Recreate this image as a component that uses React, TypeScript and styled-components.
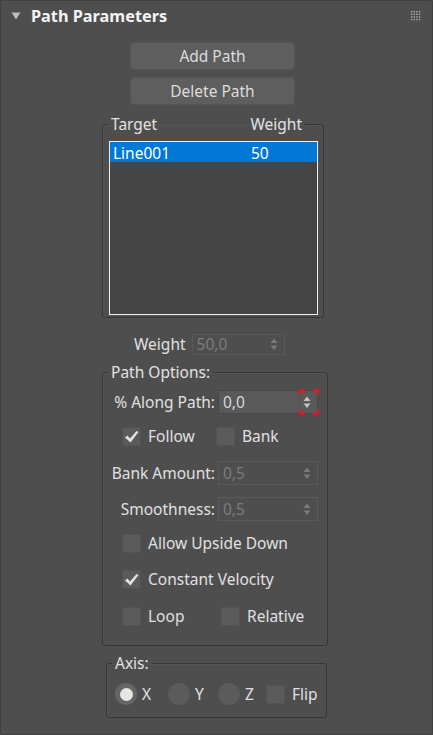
import React from "react";
import styled, { createGlobalStyle } from "styled-components";

const Global = createGlobalStyle`
  html, body { margin: 0; padding: 0; background: #4e4e4e; }
  * { box-sizing: border-box; }
  body { font-family: "Noto Sans", "Open Sans", sans-serif; font-size: 15.5px; color: #dedede; }
`;

const Page = styled.div`
  width: 433px;
  height: 735px;
  background: #4e4e4e;
  border: 1px solid #404040;
  border-radius: 2px;
  overflow: hidden;
`;

const Header = styled.div`
  height: 30px;
  display: flex;
  align-items: center;
  padding: 0 11px 0 10px;
`;

const Title = styled.div`
  flex: 1;
  margin-left: 10px;
  font-weight: 700;
  font-size: 16.3px;
  color: #f4f4f4;
`;

const Body = styled.div`
  display: flex;
  flex-direction: column;
  align-items: flex-start;
  padding-left: 101px;
`;

const Button = styled.div<{ $top: number }>`
  margin: ${(p) => p.$top}px 0 0 28px;
  width: 165px;
  height: 28px;
  border-radius: 4px;
  background: #5e5e5e;
  border: 1px solid #555;
  display: flex;
  align-items: center;
  justify-content: center;
  font-size: 15.5px;
  color: #dcdcdc;
`;

const Group = styled.fieldset<{ $w: number; $top: number; $left?: number; $pt: number; $pb: number }>`
  margin: ${(p) => p.$top}px 0 0 ${(p) => p.$left ?? 0}px;
  width: ${(p) => p.$w}px;
  min-inline-size: 0;
  border: 1px solid #363636;
  border-radius: 3px;
  padding: ${(p) => p.$pt}px 0 ${(p) => p.$pb}px 0;
  box-shadow: inset 1px 1px 0 #555;
`;

const Legend = styled.legend<{ $ml: number; $w?: number }>`
  margin-left: ${(p) => p.$ml}px;
  padding: 0 3px;
  height: 20px;
  line-height: 20px;
  font-size: 15.5px;
  color: #e2e2e2;
  ${(p) => (p.$w ? `width: ${p.$w}px; display: flex; justify-content: space-between;` : "")}
`;

const ListBox = styled.div`
  margin-left: 6px;
  width: 209px;
  height: 174px;
  background: #444;
  border: 1px solid #f0f0f0;
`;

const ListRow = styled.div<{ $selected?: boolean }>`
  height: 20px;
  display: grid;
  grid-template-columns: 138px 1fr;
  align-items: center;
  padding-left: 3px;
  background: ${(p) => (p.$selected ? "#0078d7" : "transparent")};
  color: #fff;
  font-size: 15.5px;
`;

const FieldRow = styled.div<{ $top: number; $left: number }>`
  margin: ${(p) => p.$top}px 0 0 ${(p) => p.$left}px;
  display: flex;
  align-items: center;
  gap: 6px;
`;

const Label = styled.span<{ $w?: number }>`
  font-size: 15.5px;
  color: #e0e0e0;
  white-space: nowrap;
  ${(p) => (p.$w ? `width: ${p.$w}px; text-align: right;` : "")}
`;

const Spinner = styled.div<{ $w: number; $h: number; $active?: boolean }>`
  position: relative;
  width: ${(p) => p.$w}px;
  height: ${(p) => p.$h}px;
  display: flex;
  align-items: center;
  justify-content: space-between;
  padding: 0 6px 0 4px;
  background: ${(p) => (p.$active ? "#595959" : "#4e4e4e")};
  border: 1px solid ${(p) => (p.$active ? "#484848" : "#5a5a5a")};
  color: ${(p) => (p.$active ? "#d8d8d8" : "#7c7c7c")};
  font-size: 15.5px;
`;

const Inner = styled.div`
  display: flex;
  flex-direction: column;
`;

const OptRow = styled.div<{ $top: number; $h?: number }>`
  margin-top: ${(p) => p.$top}px;
  height: ${(p) => p.$h ?? 20}px;
  display: flex;
  align-items: center;
`;

const CheckItem = styled.div<{ $left: number; $w?: number }>`
  margin-left: ${(p) => p.$left}px;
  ${(p) => (p.$w ? `width: ${p.$w}px;` : "")}
  display: flex;
  align-items: center;
  gap: 7px;
  font-size: 15.5px;
  color: #e0e0e0;
`;

const Box = styled.span`
  width: 19px;
  height: 19px;
  flex: none;
  background: #5b5b5b;
  border: 1px solid #535353;
  display: flex;
  align-items: center;
  justify-content: center;
`;

const RadioItem = styled.div<{ $w: number }>`
  width: ${(p) => p.$w}px;
  display: flex;
  align-items: center;
  gap: 5px;
  font-size: 15.5px;
  color: #e0e0e0;
`;

const Radio = styled.span<{ $on?: boolean }>`
  width: 22px;
  height: 22px;
  flex: none;
  border-radius: 50%;
  background: ${(p) => (p.$on ? "#666" : "#5b5b5b")};
  display: flex;
  align-items: center;
  justify-content: center;
  &::after {
    content: "";
    width: 13px;
    height: 13px;
    border-radius: 50%;
    background: ${(p) => (p.$on ? "#e6e6e6" : "transparent")};
  }
`;

const Focus = styled.svg`
  position: absolute;
  right: -2px;
  top: -2px;
`;

const Triangle = () => (
  <svg width="10" height="8" viewBox="0 0 10 8">
    <polygon points="0.5,0.5 9.5,0.5 5,7.5" fill="#bdbdbd" />
  </svg>
);

const Grip = () => (
  <svg width="10" height="10" viewBox="0 0 10 10">
    {[0, 1, 2, 3].flatMap((r) =>
      [0, 1, 2, 3].map((c) => (
        <rect key={`${r}-${c}`} x={c * 2.6} y={r * 2.6} width="1.4" height="1.4" fill="#a8a8a8" />
      ))
    )}
  </svg>
);

const Arrows = ({ active }: { active?: boolean }) => (
  <svg width="8" height="13" viewBox="0 0 8 13">
    <polygon points="4,0.5 7.5,5 0.5,5" fill={active ? "#c4c4c4" : "#7a7a7a"} />
    <polygon points="0.5,7.5 7.5,7.5 4,12" fill={active ? "#c4c4c4" : "#7a7a7a"} />
  </svg>
);

const Check = () => (
  <svg width="15" height="13" viewBox="0 0 15 13">
    <polygon points="1,7.5 3.5,5.5 6,8.5 12.5,1 14.5,2 6.5,12.5" fill="#e2e2e2" />
  </svg>
);

const CheckBox = ({ on }: { on?: boolean }) => <Box>{on && <Check />}</Box>;

export default function App() {
  return (
    <>
      <Global />
      <Page>
        <Header>
          <Triangle />
          <Title>Path Parameters</Title>
          <Grip />
        </Header>
        <Body>
          <Button $top={11}>Add Path</Button>
          <Button $top={7}>Delete Path</Button>

          <Group $w={222} $top={9} $pt={7} $pb={2}>
            <Legend $ml={5} $w={197}>
              <span>Target</span>
              <span>Weight</span>
            </Legend>
            <ListBox>
              <ListRow $selected>
                <span>Line001</span>
                <span>50</span>
              </ListRow>
            </ListBox>
          </Group>

          <FieldRow $top={15} $left={32}>
            <Label>Weight</Label>
            <Spinner $w={93} $h={21}>
              <span>50,0</span>
              <Arrows />
            </Spinner>
          </FieldRow>

          <Group $w={226} $top={7} $pt={8} $pb={19}>
            <Legend $ml={5}>Path Options:</Legend>
            <Inner>
              <OptRow $top={0} $h={24}>
                <Label $w={112}>% Along Path:</Label>
                <Spinner $w={100} $h={24} $active style={{ marginLeft: 3 }}>
                  <span>0,0</span>
                  <Arrows active />
                  <Focus width="20" height="26" viewBox="0 0 20 26">
                    <path
                      d="M1,6 V1 H6 M14,1 H19 V6 M19,20 V25 H14 M6,25 H1 V20"
                      fill="none"
                      stroke="#e8141a"
                      strokeWidth="2"
                    />
                  </Focus>
                </Spinner>
              </OptRow>
              <OptRow $top={12}>
                <CheckItem $left={19} $w={94}>
                  <CheckBox on />
                  Follow
                </CheckItem>
                <CheckItem $left={0}>
                  <CheckBox />
                  Bank
                </CheckItem>
              </OptRow>
              <OptRow $top={15} $h={24}>
                <Label $w={112}>Bank Amount:</Label>
                <Spinner $w={100} $h={24} style={{ marginLeft: 3 }}>
                  <span>0,5</span>
                  <Arrows />
                </Spinner>
              </OptRow>
              <OptRow $top={12} $h={24}>
                <Label $w={112}>Smoothness:</Label>
                <Spinner $w={100} $h={24} style={{ marginLeft: 3 }}>
                  <span>0,5</span>
                  <Arrows />
                </Spinner>
              </OptRow>
              <OptRow $top={12}>
                <CheckItem $left={19}>
                  <CheckBox />
                  Allow Upside Down
                </CheckItem>
              </OptRow>
              <OptRow $top={16}>
                <CheckItem $left={19}>
                  <CheckBox on />
                  Constant Velocity
                </CheckItem>
              </OptRow>
              <OptRow $top={17}>
                <CheckItem $left={19} $w={99}>
                  <CheckBox />
                  Loop
                </CheckItem>
                <CheckItem $left={0}>
                  <CheckBox />
                  Relative
                </CheckItem>
              </OptRow>
            </Inner>
          </Group>

          <Group $w={221} $top={7} $left={4} $pt={10} $pb={12}>
            <Legend $ml={5}>Axis:</Legend>
            <OptRow $top={0} $h={22} style={{ paddingLeft: 8 }}>
              <RadioItem $w={53}>
                <Radio $on />X
              </RadioItem>
              <RadioItem $w={50}>
                <Radio />Y
              </RadioItem>
              <RadioItem $w={48}>
                <Radio />Z
              </RadioItem>
              <CheckItem $left={0}>
                <CheckBox />
                Flip
              </CheckItem>
            </OptRow>
          </Group>
        </Body>
      </Page>
    </>
  );
}
